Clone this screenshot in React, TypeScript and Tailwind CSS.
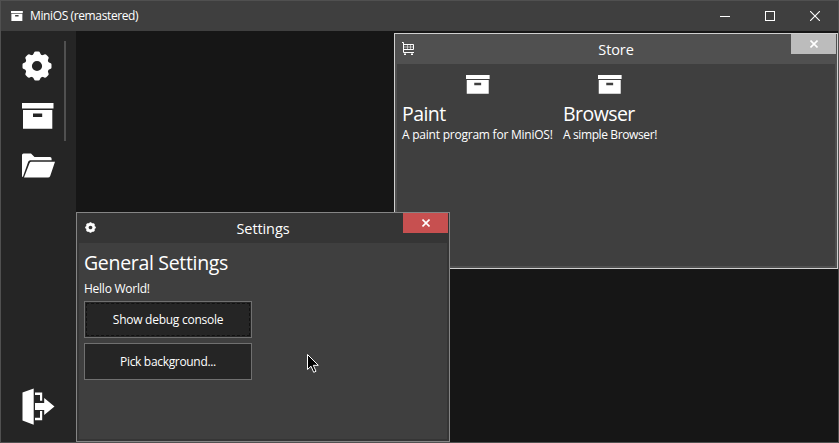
import React from "react";

function Gear({ className }: { className: string }) {
  const teeth = [0, 45, 90, 135, 180, 225, 270, 315];
  return (
    <svg viewBox="-15 -15 30 30" className={className} fill="none">
      <circle r="8.6" stroke="white" strokeWidth="7" />
      {teeth.map((angle) => (
        <path
          key={angle}
          d="M-5 -10 Q-3.6 -11.2 -3 -13.2 Q-2.6 -14.5 -1.4 -14.5 H1.4 Q2.6 -14.5 3 -13.2 Q3.6 -11.2 5 -10Z"
          fill="white"
          transform={`rotate(${angle})`}
        />
      ))}
    </svg>
  );
}

function Archive({ className }: { className: string }) {
  return (
    <svg viewBox="0 0 32 26" preserveAspectRatio="none" className={className} fill="white">
      <path d="M0 0H31.5V5.5H0Z" />
      <path fillRule="evenodd" d="M1 7H30.3V25.8H1ZM11 10.5V14H20.2V10.5Z" />
    </svg>
  );
}

function Folder() {
  return (
    <svg viewBox="0 0 34 25" className="h-[25px] w-[34px]" fill="white">
      <path d="M0 24V2Q0 .5 1.5 .5H9L12.5 4H28Q29.6 4 29.6 5.8V7.2H8.2Q6.8 7.2 6.2 8.8L1 23.5Z" />
      <path d="M2 24.5L7.5 10.2Q8 8.8 9.5 8.8H33L28.2 23Q27.6 24.5 26 24.5Z" />
    </svg>
  );
}

function Exit() {
  return (
    <svg viewBox="0 0 33 37" className="h-[37px] w-[33px]" fill="white">
      <path d="M.5 4.5L11.7 .5V36.8L.5 32.5Z" />
      <path d="M13 4.5H20.2V12.8H18V7H13ZM13 32.2H20.2V23H18V29.7H13Z" />
      <path d="M13 15H22.2V10L32.5 18.5L22.2 27V22H13Z" />
    </svg>
  );
}

function Cart() {
  return (
    <svg viewBox="0 0 13 14" className="h-[14px] w-[13px]" fill="none" stroke="white">
      <path d="M0 .5H1.5V10.5H12M2 2.5H11.5V7.5H2" />
      <path d="M5.5 3V7M8.5 3V7M2 5H11" strokeWidth="1" opacity=".55" />
      <path d="M2 12.3H4M9 12.3H11" strokeWidth="1.4" />
    </svg>
  );
}

function CloseIcon({ className }: { className: string }) {
  return (
    <svg viewBox="0 0 8 8" className={className} stroke="white" strokeWidth="1.6">
      <path d="M.5 .5L7.5 7.5M7.5 .5L.5 7.5" />
    </svg>
  );
}

function StoreItem({ name, text, className }: { name: string; text: string; className: string }) {
  return (
    <div className={`flex flex-col ${className}`}>
      <Archive className="h-[19px] w-6 self-center" />
      <h2 className="mt-[8px] h-[25px] text-[19.5px] leading-[24px] tracking-[-0.55px]">{name}</h2>
      <p className="h-4 text-[12px] leading-[16px]">{text}</p>
    </div>
  );
}

export default function App() {
  return (
    <div className="relative flex h-[443px] w-[839px] flex-col overflow-hidden border border-[#505050] bg-[#161616] font-['Open_Sans','Noto_Sans',sans-serif] font-[450] whitespace-nowrap text-white">
      <header className="flex h-[30px] shrink-0 items-center bg-[#3f3f3f] pl-[10px]">
        <Archive className="h-[10px] w-3" />
        <span className="ml-[7px] text-[12px] tracking-[-0.38px]">MiniOS (remastered)</span>
        <div className="ml-auto flex items-center gap-[35px] pr-[18px]">
          <div className="h-px w-[10px] bg-white" />
          <div className="size-[10px] border border-white" />
          <svg viewBox="0 0 10 10" className="size-[10px]" stroke="white" strokeWidth="1.1">
            <path d="M0 0L10 10M10 0L0 10" />
          </svg>
        </div>
      </header>

      <main className="flex min-h-0 flex-1">
        <aside className="flex w-[75px] bg-[#252525] pl-[21px]">
          <nav className="flex w-[42px] flex-col items-start pt-[20px]">
            <Gear className="size-[30px]" />
            <Archive className="mt-[22px] h-[26px] w-8" />
            <div className="mt-[24px]"><Folder /></div>
            <div className="mt-auto mb-[17px]"><Exit /></div>
          </nav>
          <div className="mt-[10px] h-[100px] w-[2px] bg-[#505050]" />
        </aside>
      </main>

      <section className="absolute top-[32px] left-[393px] flex h-[236px] w-[444px] flex-col border border-[#d0d0d0] bg-[#505050] px-[2px] pb-[2px]">
        <header className="relative flex h-[30px] shrink-0 items-center justify-center">
          <span className="absolute top-[8px] left-[5px]"><Cart /></span>
          <h1 className="pt-[2px] text-[14.5px] tracking-[-0.1px]">Store</h1>
          <button className="absolute top-0 -right-px flex h-5 w-[45px] items-center justify-center bg-[#bcbcbc]">
            <CloseIcon className="size-2" />
          </button>
        </header>
        <div className="flex flex-1 gap-[10px] bg-[#3f3f3f] pt-[11px] pl-[5px]">
          <StoreItem name="Paint" text="A paint program for MiniOS!" className="w-[151px] tracking-[-0.23px]" />
          <StoreItem name="Browser" text="A simple Browser!" className="w-[94px] tracking-[-0.38px]" />
        </div>
      </section>

      <section className="absolute top-[211px] left-[75px] flex h-[230px] w-[374px] flex-col border border-[#858585] bg-[#353535] px-[2px] pb-[2px]">
        <header className="relative flex h-[30px] shrink-0 items-center justify-center">
          <span className="absolute top-[9px] left-[6px]"><Gear className="size-[11px]" /></span>
          <h1 className="pt-[2px] text-[14.5px] tracking-[-0.1px]">Settings</h1>
          <button className="absolute top-0 -right-px flex h-5 w-[45px] items-center justify-center bg-[#c75050]">
            <CloseIcon className="size-2" />
          </button>
        </header>
        <div className="flex flex-1 flex-col items-start bg-[#3f3f3f] pt-[8px] pl-[5px]">
          <h2 className="h-6 text-[19.5px] leading-[24px] tracking-[-0.32px]">General Settings</h2>
          <p className="mt-[6px] h-4 text-[12px] leading-[16px] tracking-[-0.25px]">Hello World!</p>
          <button className="mt-[4px] h-[37px] w-[168px] border border-[#707070] bg-[#252525] p-px text-[12px] tracking-[-0.26px]">
            <span className="flex h-full items-center justify-center border border-dashed border-[#111111]">Show debug console</span>
          </button>
          <button className="mt-[5px] h-[37px] w-[168px] border border-[#707070] bg-[#252525] text-[12px] tracking-[-0.32px]">Pick background...</button>
        </div>
      </section>

      <svg viewBox="0 0 13 20" className="absolute top-[353px] left-[306px] h-5 w-[13px]">
        <path d="M.5 .5V15.5L4 12.2L6.7 18.3L9 17.3L6.3 11.3H11.3Z" fill="black" stroke="white" />
      </svg>
    </div>
  );
}
